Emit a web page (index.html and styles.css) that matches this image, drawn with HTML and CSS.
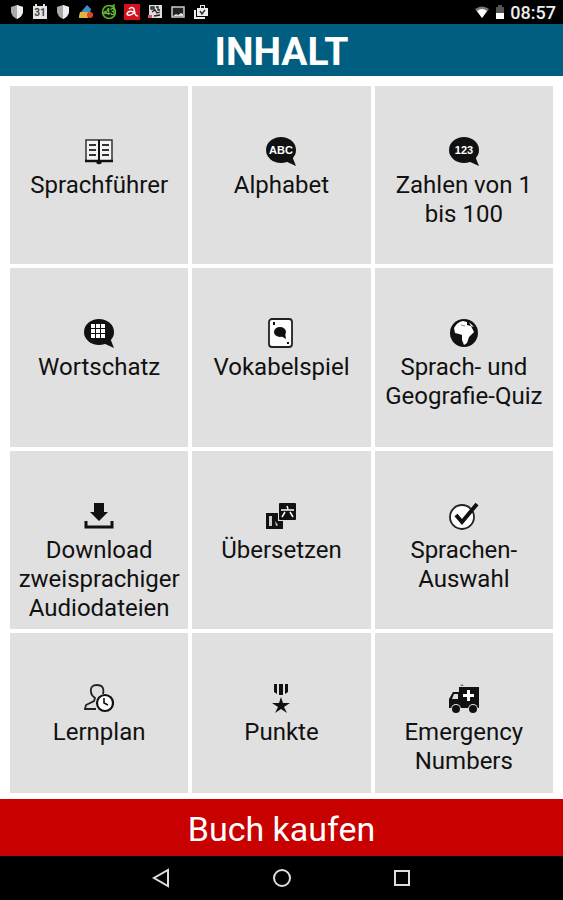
FILE: index.html
```html
<!DOCTYPE html>
<html lang="de">
<head>
  <meta charset="UTF-8">
  <meta name="viewport" content="width=device-width, initial-scale=1">
  <title>Inhalt</title>
  <link rel="stylesheet" href="styles.css">
</head>
<body>

<!-- Android status bar -->
<div class="status-bar">
  <div class="status-icons">
    <svg class="status-icon" viewBox="0 0 16 16"><path d="M8 1 14 3V8Q13 13 8 15Q3 13 2 8V3Z" fill="#aaa"/><path d="M8 1 14 3V8Q13 13 8 15Z" fill="#eee"/></svg>
    <svg class="status-icon" viewBox="0 0 16 16"><path d="M1 2H3V0H5V2H11V0H13V2H15V15H1Z" fill="#e4e4e4"/><text x="8" y="12" text-anchor="middle" class="icon-date">31</text></svg>
    <svg class="status-icon" viewBox="0 0 16 16"><path d="M8 1 14 3V8Q13 13 8 15Q3 13 2 8V3Z" fill="#aaa"/><path d="M8 1 14 3V8Q13 13 8 15Z" fill="#eee"/></svg>
    <svg class="status-icon" viewBox="0 0 16 16"><path d="M3 8 9 1 13 5 12 9Z" fill="#3d8fc6"/><path d="M2 8H12L9 12H1Z" fill="#e2b23c"/><path d="M1 12H10V14H1Z" fill="#e2b23c"/><circle cx="12" cy="11" r="3" fill="#df4826"/></svg>
    <svg class="status-icon" viewBox="0 0 16 16"><circle cx="8" cy="8" r="6.5" fill="#071804" stroke="#62ae35" stroke-width="1.5"/><path d="M1 10 5 7 3 10M10 3 13 1 13 5" fill="none" stroke="#62ae35" stroke-width="1.5"/><text x="9" y="11" text-anchor="middle" class="icon-count">43</text></svg>
    <svg class="status-icon" viewBox="0 0 16 16"><path d="M0 0H16V16H0Z" fill="#d7101d"/><path d="M5 5Q8 2 10 5L11 10Q12 12 14 12M10 8Q4 6 3 10Q4 13 10 9" fill="none" stroke="#fff" stroke-width="1.5"/></svg>
    <svg class="status-icon" viewBox="0 0 16 16"><path d="M2 1H15V14H2Z" fill="#ddd"/><path d="M4 3H7V5H4ZM9 3H11V6H13M5 8 8 6 10 9 13 8M7 12 13 11" fill="none" stroke="#222" stroke-width="1.3"/><path d="M1 11H5V14H1Z" fill="#d95a5a"/></svg>
    <svg class="status-icon" viewBox="0 0 16 16"><path d="M2 3H14V13H2Z" fill="#222" stroke="#ccc" stroke-width="1.5"/><path d="M3 12 6 10 8 11 11 9 13 10V12Z" fill="#ddd"/></svg>
    <svg class="status-icon" viewBox="0 0 16 16"><path d="M4 4H7V1H12V4H15V12H4Z" fill="#eee"/><path d="M8 4V2H11V4" fill="#111"/><path d="M2 6V14H12" fill="none" stroke="#eee" stroke-width="2"/><path d="M7 7 9 10 12 6" fill="none" stroke="#333" stroke-width="1.5"/></svg>
  </div>
  <div class="status-info">
    <svg class="wifi-icon" viewBox="0 0 16 16"><path d="M1 5Q8 0 15 5L8 14Z" fill="#777"/><path d="M3 7Q8 3 13 7L8 14Z" fill="#fff"/></svg>
    <svg class="battery-icon" viewBox="0 0 10 14"><path d="M1 2H3V0H7V2H9V14H1Z" fill="#555"/><path d="M1 8H9V14H1Z" fill="#fff"/></svg>
    <span>08:57</span>
  </div>
</div>

<header class="title-bar">
  <h1>INHALT</h1>
</header>

<main class="content">
  <nav class="menu">
    <a class="tile" href="#sprachfuehrer">
      <svg class="tile-icon" viewBox="0 0 30 30"><path d="M2 4H28V25H2Z" fill="#f4f4f4" stroke="#333" stroke-width="1.5"/><path d="M15 4V25" stroke="#111" stroke-width="2"/><path d="M1 25H29M13 26Q15 28 17 26" stroke="#111" stroke-width="2.5" fill="#111"/><path d="M5 9H12M5 14H12M5 19H12M18 9H25M18 14H25M18 19H25" stroke="#333" stroke-width="2"/></svg>
      <span>Sprachführer</span>
    </a>
    <a class="tile" href="#alphabet">
      <svg class="tile-icon" viewBox="0 0 30 30"><ellipse cx="15" cy="14" rx="15" ry="13"/><path d="M19 25 30 30 26 20Z"/><text x="15" y="18" text-anchor="middle" class="icon-label">ABC</text></svg>
      <span>Alphabet</span>
    </a>
    <a class="tile" href="#zahlen">
      <svg class="tile-icon" viewBox="0 0 30 30"><ellipse cx="15" cy="14" rx="15" ry="13"/><path d="M19 25 30 30 26 20Z"/><text x="15" y="18" text-anchor="middle" class="icon-label">123</text></svg>
      <span>Zahlen von 1 bis 100</span>
    </a>
    <a class="tile" href="#wortschatz">
      <svg class="tile-icon" viewBox="0 0 30 30"><ellipse cx="15" cy="14" rx="15" ry="13"/><path d="M19 25 30 30 26 20Z"/><path d="M7 6H11V10H7ZM12 6H16V10H12ZM17 6H21V10H17ZM7 11H11V15H7ZM12 11H16V15H12ZM17 11H21V15H17ZM7 16H11V20H7ZM12 16H16V20H12ZM17 16H21V20H17Z" fill="#fff"/></svg>
      <span>Wortschatz</span>
    </a>
    <a class="tile" href="#vokabelspiel">
      <svg class="tile-icon" viewBox="0 0 30 30"><rect x="3" y="1" width="23" height="28" rx="3" fill="#fff" stroke="#222" stroke-width="1.8"/><ellipse cx="14" cy="14" rx="6" ry="5"/><path d="M15 18 20 21 19 15Z"/><path d="M7 4H9V7H7ZM21 24H23V26H21Z"/></svg>
      <span>Vokabelspiel</span>
    </a>
    <a class="tile" href="#quiz">
      <svg class="tile-icon" viewBox="0 0 30 30"><circle cx="15" cy="15" r="14"/><path d="M5 10Q8 4 14 3L18 4 18 7 22 8 25 14 22 17 20 19 18 25 15 27 13 22 13 17 10 16 6 15Z" fill="#fff"/><path d="M20 4 25 9 22 8Z" fill="#fff"/><path d="M12 7 16 8" stroke="#888" stroke-width="1" fill="none"/></svg>
      <span>Sprach- und Geografie-Quiz</span>
    </a>
    <a class="tile" href="#download">
      <svg class="tile-icon" viewBox="0 0 30 30"><path d="M10 2H20V11H24L15 20 6 11H10Z"/><path d="M2 20V26H28V20" fill="none" stroke="#111" stroke-width="3"/></svg>
      <span>Download zweisprachiger Audiodateien</span>
    </a>
    <a class="tile" href="#uebersetzen">
      <svg class="tile-icon" viewBox="0 0 30 30"><path d="M0 12H12V20H17V28H0Z"/><path d="M3 15H6V25H3ZM9 20 12 24 10 25Z" fill="#ccc"/><rect x="13" y="2" width="17" height="17" rx="1"/><path d="M15 9H28M21 5 22 8M19 11 16 16M24 11 27 16" stroke="#fff" stroke-width="1.5" fill="none"/></svg>
      <span>Übersetzen</span>
    </a>
    <a class="tile" href="#sprachen">
      <svg class="tile-icon" viewBox="0 0 30 30"><circle cx="13" cy="16" r="12" fill="#fff" stroke="#222" stroke-width="1.8"/><path d="M7 14 13 21 28 3" fill="none" stroke="#111" stroke-width="4"/></svg>
      <span>Sprachen-Auswahl</span>
    </a>
    <a class="tile" href="#lernplan">
      <svg class="tile-icon" viewBox="0 0 30 30"><path d="M19 11Q21 2 13 2Q6 2 7 9Q7 12 11 15L10 18 2 22 1 26H12" fill="none" stroke="#222" stroke-width="1.8"/><circle cx="21" cy="20" r="8" fill="#fff" stroke="#111" stroke-width="2.2"/><path d="M20 15V20L24 22" fill="none" stroke="#111" stroke-width="1.6"/></svg>
      <span>Lernplan</span>
    </a>
    <a class="tile" href="#punkte">
      <svg class="tile-icon" viewBox="0 0 30 30"><path d="M8 1H11V11L8 9ZM13 1H17V12H13ZM19 1H22V9L19 11Z"/><path d="M15 14 17 20H24L18 24 21 30 15 26 9 30 12 24 6 20H13Z"/></svg>
      <span>Punkte</span>
    </a>
    <a class="tile" href="#notruf">
      <svg class="tile-icon" viewBox="0 0 30 30"><path d="M10 4H30V25H0V16L4 9H10Z"/><path d="M5 11H9V16H3Z" fill="#ddd"/><path d="M18 7H21V11H25V14H21V18H18V14H14V11H18Z" fill="#fff"/><path d="M11 3 13 1 15 3Z" fill="#777"/><circle cx="7" cy="26" r="5" fill="#e0e0e0"/><circle cx="24" cy="26" r="5" fill="#e0e0e0"/><circle cx="7" cy="26" r="4"/><circle cx="24" cy="26" r="4"/></svg>
      <span>Emergency Numbers</span>
    </a>
  </nav>
</main>

<button class="buy-button" type="button">Buch kaufen</button>

<!-- Android navigation buttons -->
<div class="nav-bar">
  <button class="nav-button" type="button" aria-label="Zurück">
    <svg viewBox="0 0 20 20"><path d="M16 2V18L2 10Z"/></svg>
  </button>
  <button class="nav-button" type="button" aria-label="Startseite">
    <svg viewBox="0 0 20 20"><circle cx="10" cy="10" r="8"/></svg>
  </button>
  <button class="nav-button" type="button" aria-label="Übersicht">
    <svg viewBox="0 0 20 20"><path d="M3 3H17V17H3Z"/></svg>
  </button>
</div>

</body>
</html>
```
FILE: styles.css
```css
* {
  box-sizing: border-box;
}

body {
  display: flex;
  flex-direction: column;
  height: 100vh;
  margin: 0;
  background: #fff;
  color: #111;
  font-family: Roboto, "Liberation Sans", sans-serif;
}

/* Status bar */
.status-bar {
  display: flex;
  flex: none;
  align-items: center;
  justify-content: space-between;
  height: 24px;
  padding: 0 7px 0 9px;
  background: #000;
  color: #eee;
  font-size: 18px;
  font-weight: 500;
}

.status-icons {
  display: flex;
  gap: 7px;
}

.status-info {
  display: flex;
  align-items: center;
  gap: 5px;
}

.status-icon,
.wifi-icon {
  width: 16px;
  height: 16px;
}

.battery-icon {
  width: 10px;
  height: 14px;
}

.icon-date {
  font-size: 10px;
  font-weight: bold;
  fill: #444;
}

.icon-count {
  font-size: 9px;
  fill: #7bc74a;
}

/* Page title */
.title-bar {
  flex: none;
  padding-top: 4px;
  background: #005f80;
  color: #fff;
  text-align: center;
}

.title-bar h1 {
  margin: 0;
  font-size: 39px;
  line-height: 48px;
}

/* The menu scrolls between the title and the buy button */
.content {
  flex: 1;
  min-height: 0;
  margin: 10px 10px 6px;
  overflow-y: auto;
  scrollbar-width: none;
}

.menu {
  display: grid;
  grid-template-columns: repeat(3, 1fr);
  gap: 4px;
}

.tile {
  display: flex;
  flex-direction: column;
  align-items: center;
  gap: 5px;
  aspect-ratio: 1;
  padding: 50px 6px 0;
  background: #e0e0e0;
  color: inherit;
  font-size: 24px;
  line-height: 29px;
  text-align: center;
  text-decoration: none;
}

.tile-icon {
  flex: none;
  width: 30px;
  height: 30px;
  fill: #111;
}

.icon-label {
  font-family: "Liberation Sans", sans-serif;
  font-size: 11px;
  font-weight: bold;
  fill: #fff;
}

.buy-button {
  flex: none;
  height: 57px;
  padding: 2px 0 0;
  border: none;
  background: #c80000;
  color: #fff;
  font-family: inherit;
  font-size: 34px;
  cursor: pointer;
}

/* Navigation bar */
.nav-bar {
  display: flex;
  flex: none;
  justify-content: center;
  gap: 100px;
  height: 44px;
  background: #000;
}

.nav-button {
  display: flex;
  align-items: center;
  padding: 0;
  border: none;
  background: none;
}

.nav-button svg {
  width: 20px;
  height: 20px;
  fill: none;
  stroke: #ddd;
  stroke-width: 2;
}
```
